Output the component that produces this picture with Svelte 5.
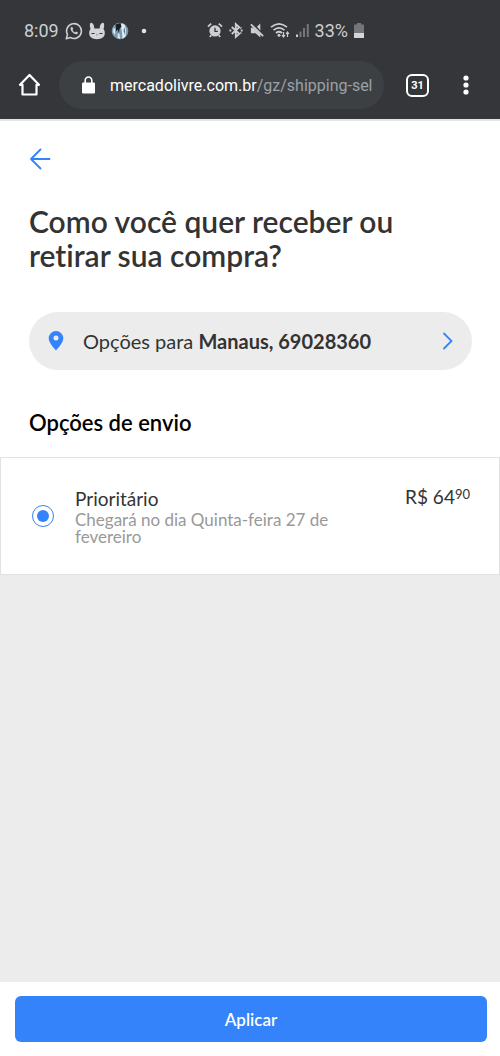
<script>
  let selected = 'prioritario'

  const place = 'Manaus, 69028360'

  const options = [
    {
      id: 'prioritario',
      name: 'Prioritário',
      promise: 'Chegará no dia Quinta-feira 27 de fevereiro',
      price: '64',
      cents: '90'
    }
  ]
</script>

<style>
  :global(body) {
    margin: 0;
  }

  .screen {
    display: flex;
    flex-direction: column;
    min-height: 100vh;
    background: #ececec;
    color: #333;
    font-family: Lato, 'Open Sans', sans-serif;
    font-variant-ligatures: none;
  }

  button {
    border: 0;
    padding: 0;
    background: none;
    color: inherit;
    font: inherit;
    cursor: pointer;
  }

  svg {
    display: block;
    flex: none;
  }

  /* Phone and browser bars */
  .chrome {
    background: #35363a;
    color: #fff;
    font-family: Roboto, sans-serif;
    border-bottom: 2px solid #e4e5e6;
  }

  .status {
    display: flex;
    align-items: center;
    justify-content: space-between;
    height: 61px;
    padding: 0 135px 0 24px;
    box-sizing: border-box;
    color: #cdced0;
    font-size: 18px;
  }

  .status-group {
    display: flex;
    align-items: center;
    gap: 6px;
  }

  .status-group .dot {
    margin-left: 6px;
  }

  .status-right {
    gap: 5px;
  }

  .toolbar {
    display: flex;
    align-items: center;
    padding: 0 29px 10px 18px;
  }

  .address {
    display: flex;
    flex: 1;
    align-items: center;
    gap: 14px;
    min-width: 0;
    height: 48px;
    margin: 0 22px 0 17px;
    padding: 0 12px 0 22px;
    border-radius: 24px;
    background: #3c4043;
    font-size: 16px;
    text-align: left;
  }

  .url {
    flex: 1;
    overflow: hidden;
    white-space: nowrap;
  }

  .path {
    color: #9aa0a6;
  }

  .tabs {
    width: 23px;
    height: 23px;
    margin-right: 32px;
    box-sizing: border-box;
    border: 2px solid #fff;
    border-radius: 6px;
    font-size: 11px;
    font-weight: 700;
    line-height: 19px;
  }

  /* Page */
  .top {
    padding: 27px 28px 21px 29px;
    background: #fff;
  }

  .back {
    display: block;
    color: #3483fa;
  }

  h1 {
    margin: 34px 0 0;
    font-size: 30px;
    font-weight: 600;
    line-height: 34px;
  }

  .place {
    display: flex;
    align-items: center;
    width: 100%;
    height: 58px;
    margin: 40px 0;
    padding: 0 18px;
    border-radius: 29px;
    background: #ececec;
    font-size: 20px;
    text-align: left;
  }

  .place-text {
    flex: 1;
    margin-left: 18px;
  }

  h2 {
    margin: 0;
    color: #000;
    font-size: 22px;
    font-weight: 600;
    line-height: 26px;
  }

  .option {
    display: flex;
    align-items: center;
    min-height: 118px;
    padding: 0 29px 0 30px;
    box-sizing: border-box;
    border: 1px solid #e2e2e2;
    background: #fff;
  }

  .option input {
    appearance: none;
    display: grid;
    place-items: center;
    flex: none;
    width: 22px;
    height: 22px;
    margin: 0 21px 0 1px;
    border: 1px solid #3483fa;
    border-radius: 50%;
  }

  .option input:checked::before {
    content: '';
    width: 12px;
    height: 12px;
    border-radius: 50%;
    background: #3483fa;
  }

  .info {
    flex: 1;
    max-width: 270px;
  }

  .name,
  .price {
    font-size: 19px;
    line-height: 24px;
  }

  .name,
  .promise {
    display: block;
  }

  .promise {
    color: #999;
    font-size: 17px;
    line-height: 17px;
  }

  .price {
    align-self: flex-start;
    margin: 27px 0 0 auto;
  }

  .price sup {
    font-size: 13px;
    line-height: 1;
    vertical-align: 5px;
  }

  .footer {
    margin-top: auto;
    padding: 14px 13px 14px 15px;
    background: #fff;
  }

  .apply {
    width: 100%;
    height: 46px;
    border-radius: 6px;
    background: #3483fa;
    color: #fff;
    font-size: 17px;
    font-weight: 600;
  }
</style>

<div class="screen">
  <header class="chrome">
    <div class="status">
      <div class="status-group">
        <span>8:09</span>
        <svg width="18" height="18" viewBox="0 0 18 18" fill="none" stroke="#cdced0" stroke-width="1.6">
          <path d="M1.3 16.7l1.2-4.1a7.4 7.4 0 1 1 2.9 2.9z" stroke-linejoin="round" />
          <path d="M6 5.2c-1.2 1.7.2 4 1.8 5.4 1.6 1.5 3.5 2.2 4.7 1.1.7-.6.5-1.2 0-1.5l-1.4-.7-1.1 1c-1.2-.5-2-1.3-2.5-2.4l.7-1-.5-1.5C7.4 4.900 6.500 4.700 6 5.200z" fill="#cdced0" stroke="none" />
        </svg>
        <svg width="16" height="18" viewBox="0 0 16 18">
          <path d="M1.3 1.3C2.6-.2 5.300 2 5.300 6.500h5.400c0-4.500 2.700-6.700 4-5.200.8 1 .5 3.700-.2 5.600.8.9 1.300 2.300 1.300 4.100 0 4-3 6.200-7.800 6.200S.2 15 .2 11c0-1.800.5-3.200 1.300-4.100C.8 5 .5 2.300 1.300 1.300z" fill="#d5d5d5" />
          <path d="M2.500 11.500h3M10.500 11.500h3" fill="none" stroke="#35363a" stroke-width="1" />
          <path d="M7.300 12.500l.7.7.7-.7" fill="none" stroke="#77787b" stroke-width="1" />
        </svg>
        <svg width="18" height="18" viewBox="0 0 18 18">
          <circle cx="9" cy="9" r="8.300" fill="#7f9db2" />
          <path d="M9.500 1.500l4 1 1.500 5-.5 7-3 2.500-.5-7z" fill="#e3edf2" />
          <path d="M4.500 2.500L9.500 1l1 3.500-2 2.500-.5 4-1.500-3.500L4.500 10 5 6z" fill="#182027" />
          <path d="M2.500 6l2 1-.5 6-2-3zM7 11l1.500 1 .5 5-2.500-1z" fill="#dce9ef" />
          <path d="M13.200 5l.8 3-.5 5-1-4z" fill="#506f87" />
        </svg>
        <svg class="dot" width="6" height="6" viewBox="0 0 6 6"><circle cx="3" cy="3" r="2.300" fill="#e0e0e0" /></svg>
      </div>
      <div class="status-group status-right">
        <svg width="16" height="17" viewBox="0 0 17 17" fill="none" stroke="#cdced0">
          <circle cx="8.500" cy="9" r="6" fill="#cdced0" stroke="none" />
          <path d="M1 4.500L4.500 1.300M16 4.500l-3.500-3.200M4.500 13.500L3 15.500M12.500 13.500l1.500 2" stroke-width="1.800" />
          <path d="M8.500 5.500V9.500h3" stroke="#35363a" stroke-width="1.400" />
        </svg>
        <svg width="16" height="17" viewBox="0 0 17 17" fill="none" stroke="#cdced0" stroke-width="2">
          <path d="M4 4.800l8 7.200-3.700 3.300V1.700L12 5 4 12.200" />
          <path d="M1.500 8.500h2M13.500 8.500h2M13.200 5.500l1 .7M13.200 11.500l1-.7" />
        </svg>
        <svg width="16" height="17" viewBox="0 0 17 17">
          <path d="M2 5.500h2.500l7.500 7.300V16l-5-4.500H2zM8.500 4.500L12 1v7.500z" fill="#cdced0" />
          <path d="M2 2l13 12.500" stroke="#cdced0" stroke-width="2" />
        </svg>
        <svg width="20" height="17" viewBox="0 0 20 17" fill="none" stroke="#cdced0" stroke-width="1.700">
          <path d="M1 5.200q8-6.800 16 0M3.500 8.200q5.500-4.700 11 0M6 11q3-2.500 6 0" />
          <circle cx="9" cy="13.300" r="1.500" fill="#cdced0" stroke="none" />
          <path d="M13.500 10v4.500M12 13l1.500 2 1.500-2M17.500 15v-4.500M16 12l1.500-2 1.500 2" stroke-width="1.200" />
        </svg>
        <svg width="15" height="17" viewBox="0 0 15 17">
          <path d="M1 12.500h2V15H1z" fill="#cdced0" />
          <path d="M4.500 9.500h2V15h-2zM8 6h2v9H8zM11.800 2h2v13h-2z" fill="#75767a" />
        </svg>
        <span>33%</span>
        <svg width="12" height="17" viewBox="0 0 12 17">
          <path d="M4 1h4v1.500h2.500q.5 0 .5.5v12.500q0 .5-.5.5h-9q-.5 0-.5-.5V3q0-.5.5-.5H4z" fill="#75767a" />
          <path d="M1 11h10v4.500q0 .5-.5.5h-9q-.5 0-.5-.5z" fill="#d5d5d5" />
        </svg>
      </div>
    </div>

    <div class="toolbar">
      <button aria-label="Página inicial">
        <svg width="24" height="24" viewBox="0 0 24 24" fill="none" stroke="#fff" stroke-width="2.200" stroke-linejoin="round" stroke-linecap="round">
          <path d="M2 11.800L11.500 2 21 11.800h-2.500V21.500h-14v-9.700z" />
        </svg>
      </button>
      <button class="address">
        <svg width="15" height="18" viewBox="0 0 15 18">
          <rect x="1" y="6.500" width="13" height="11" rx="1.200" fill="#fff" />
          <path d="M4.200 7V4.300a3.300 3.300 0 0 1 6.600 0V7" fill="none" stroke="#fff" stroke-width="1.600" />
        </svg>
        <span class="url">mercadolivre.com.br<span class="path">/gz/shipping-sele</span></span>
      </button>
      <button class="tabs" aria-label="Abas abertas">31</button>
      <button aria-label="Mais opções">
        <svg width="10" height="22" viewBox="0 0 10 22" fill="#fff">
          <circle cx="5" cy="4" r="2.600" />
          <circle cx="5" cy="11" r="2.600" />
          <circle cx="5" cy="18" r="2.600" />
        </svg>
      </button>
    </div>
  </header>

  <section class="top">
    <button class="back" aria-label="Voltar">
      <svg width="22" height="22" viewBox="0 0 22 22" fill="none" stroke="currentColor" stroke-width="1.800" stroke-linecap="round" stroke-linejoin="round">
        <path d="M11.500 1.500L2 11l9.500 9.500M2 11h18.500" />
      </svg>
    </button>

    <h1>Como você quer receber ou retirar sua compra?</h1>

    <button class="place">
      <svg width="18" height="22" viewBox="0 0 18 22">
        <path d="M9 1a7.300 7.300 0 0 1 7.300 7.300C16.300 12.500 12 17 9 20.500 6 17 1.700 12.500 1.700 8.300A7.300 7.300 0 0 1 9 1zm0 4.400a2.500 2.500 0 1 0 0 5 2.500 2.500 0 0 0 0-5z" fill="#3483fa" />
      </svg>
      <span class="place-text">Opções para <strong>{place}</strong></span>
      <svg width="12" height="18" viewBox="0 0 12 18" fill="none" stroke="#3483fa" stroke-width="1.800" stroke-linecap="round">
        <path d="M2 1.500L9.500 9 2 16.500" />
      </svg>
    </button>

    <h2>Opções de envio</h2>
  </section>

  {#each options as option (option.id)}
    <label class="option">
      <input type="radio" name="shipping" value={option.id} bind:group={selected} />
      <span class="info">
        <span class="name">{option.name}</span>
        <span class="promise">{option.promise}</span>
      </span>
      <span class="price">R$ {option.price}<sup>{option.cents}</sup></span>
    </label>
  {/each}

  <footer class="footer">
    <button class="apply">Aplicar</button>
  </footer>
</div>
